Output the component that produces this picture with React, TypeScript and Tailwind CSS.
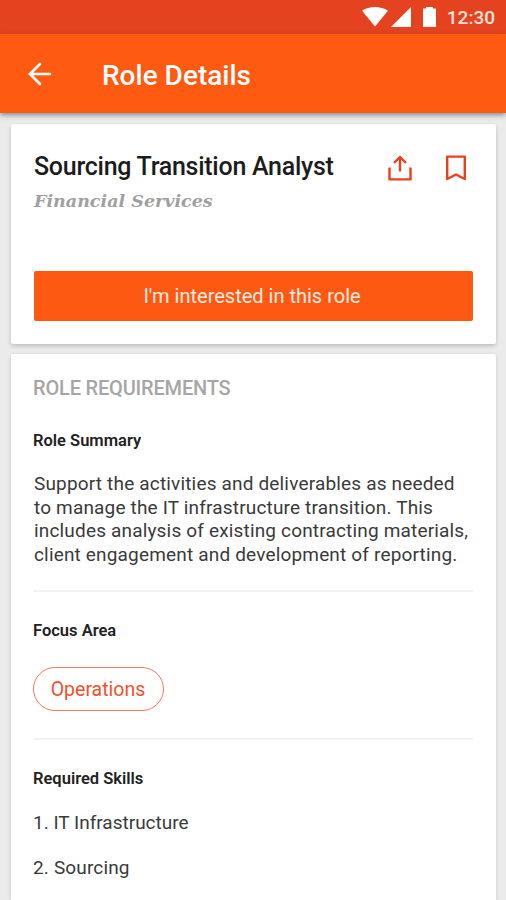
import type { ReactNode } from "react";

const skills = [
  { name: "IT Infrastructure", spacing: "tracking-[0px]" },
  { name: "Sourcing", spacing: "tracking-[0.15px]" },
];

const summaryLines = [
  "Support the activities and deliverables as needed",
  "to manage the IT infrastructure transition. This",
  "includes analysis of existing contracting materials,",
  "client engagement and development of reporting.",
];

function StatusBar() {
  return (
    <div className="h-[34px] bg-[#e5431f] flex items-center justify-end pr-[11px] text-white">
      <svg width="26" height="20" viewBox="0 0 26 20" fill="currentColor">
        <path d="M0 3.8C7.5-1.2 18.5-1.2 26 3.8L13 19.5Z" />
      </svg>
      <svg width="20" height="20" viewBox="0 0 20 20" fill="currentColor" className="ml-[3px]">
        <path d="M20 0V20H0Z" />
      </svg>
      <svg width="13" height="20" viewBox="0 0 13 20" fill="currentColor" className="ml-3">
        <path d="M0 1.5H3V0H10V1.5H13V20H0Z" />
      </svg>
      <span className="ml-[11px] mt-px text-[19px] leading-5 font-medium text-[#ffe3dc]">12:30</span>
    </div>
  );
}

function Header() {
  return (
    <div className="relative h-[79px] bg-[#fe5a12] flex items-center pl-7 text-white shadow-[0_2px_5px_rgba(40,60,70,0.55)]">
      <svg
        width="24"
        height="24"
        viewBox="0 0 24 24"
        fill="none"
        stroke="currentColor"
        strokeWidth="2.7"
        strokeLinecap="round">
        <path d="M22 12H2.5M12 2L2 12L12 22" />
      </svg>
      <h1 className="ml-[50px] mt-1 text-[28px] leading-8 font-medium">Role Details</h1>
    </div>
  );
}

function Heading({ children }: { children: ReactNode }) {
  return <h3 className="pt-px text-[16.5px] leading-5 font-semibold text-[#222]">{children}</h3>;
}

export default function App() {
  return (
    <div className="w-[506px] h-[900px] overflow-hidden bg-[#ebebeb] flex flex-col font-['Roboto',sans-serif]">
      <StatusBar />
      <Header />

      <div className="flex flex-col flex-1 gap-[10px] pt-[11px] pl-[11px] pr-[10px] min-h-0">
        {/* Role title + actions */}
        <div className="h-[220px] shrink-0 rounded-[2px] bg-white px-[23px] pt-7 shadow-[0_2px_4px_rgba(0,0,0,0.2)]">
          <div className="flex h-[119px] justify-between">
            <div>
              <h2 className="text-[25px] leading-[30px] tracking-[-0.27px] font-medium text-[#1c1c1c] whitespace-nowrap">
                Sourcing Transition Analyst
              </h2>
              <p className="mt-[7px] text-[17.5px] leading-6 font-bold italic text-[#a0a0a0] font-['DejaVu_Serif',serif] whitespace-nowrap">
                Financial Services
              </p>
            </div>
            <div className="flex items-start gap-[34px] pt-[3px] pr-[7px] text-[#ec3f1b]">
              <svg
                width="24"
                height="26"
                viewBox="0 0 24 26"
                fill="none"
                stroke="currentColor"
                strokeWidth="2.4"
                strokeLinejoin="round">
                <path d="M1.5 12.5V24.4H22.5V12.5M12 16.5V2M6 8L12 2L18 8" />
              </svg>
              <svg
                width="20"
                height="26"
                viewBox="0 0 20 26"
                fill="none"
                stroke="currentColor"
                strokeWidth="2.4"
                strokeLinejoin="round">
                <path d="M1.2 1.6H18.8V24L10 19.5L1.2 24Z" />
              </svg>
            </div>
          </div>
          <button className="block w-[439px] h-[50px] rounded-[2px] bg-[#fd5912] pr-[3px] text-[20px] text-[#ffebe2]">
            I'm interested in this role
          </button>
        </div>

        {/* Requirements */}
        <div className="flex-1 rounded-t-[2px] bg-white pl-[22px] pr-[23px] pt-[22px] shadow-[0_1px_4px_rgba(0,0,0,0.15)]">
          <h2 className="text-[20px] leading-6 tracking-[-0.18px] font-medium text-[#a6a6a6]">ROLE REQUIREMENTS</h2>

          <div className="mt-[30px] h-[162px] border-b-2 border-[#f3f3f3]">
            <Heading>Role Summary</Heading>
            <div className="mt-[21px] pl-px text-[19px] leading-[23.7px] tracking-[0.17px] text-[#3a3a3a] whitespace-nowrap">
              {summaryLines.map((line) => (
                <p key={line}>{line}</p>
              ))}
            </div>
          </div>

          <div className="mt-7 h-[120px] border-b-2 border-[#f3f3f3]">
            <Heading>Focus Area</Heading>
            <span className="mt-[26px] flex w-[131px] h-[44px] items-center justify-center rounded-full border-[1.5px] border-[#f27a5d] pt-px pr-px text-[19.5px] text-[#f0512c]">
              Operations
            </span>
          </div>

          <div className="mt-7">
            <Heading>Required Skills</Heading>
            <ol className="mt-[22px] flex flex-col gap-[21px] text-[19px] leading-6 text-[#3a3a3a]">
              {skills.map((skill, i) => (
                <li key={skill.name} className={skill.spacing}>
                  {i + 1}. {skill.name}
                </li>
              ))}
            </ol>
          </div>
        </div>
      </div>
    </div>
  );
}
